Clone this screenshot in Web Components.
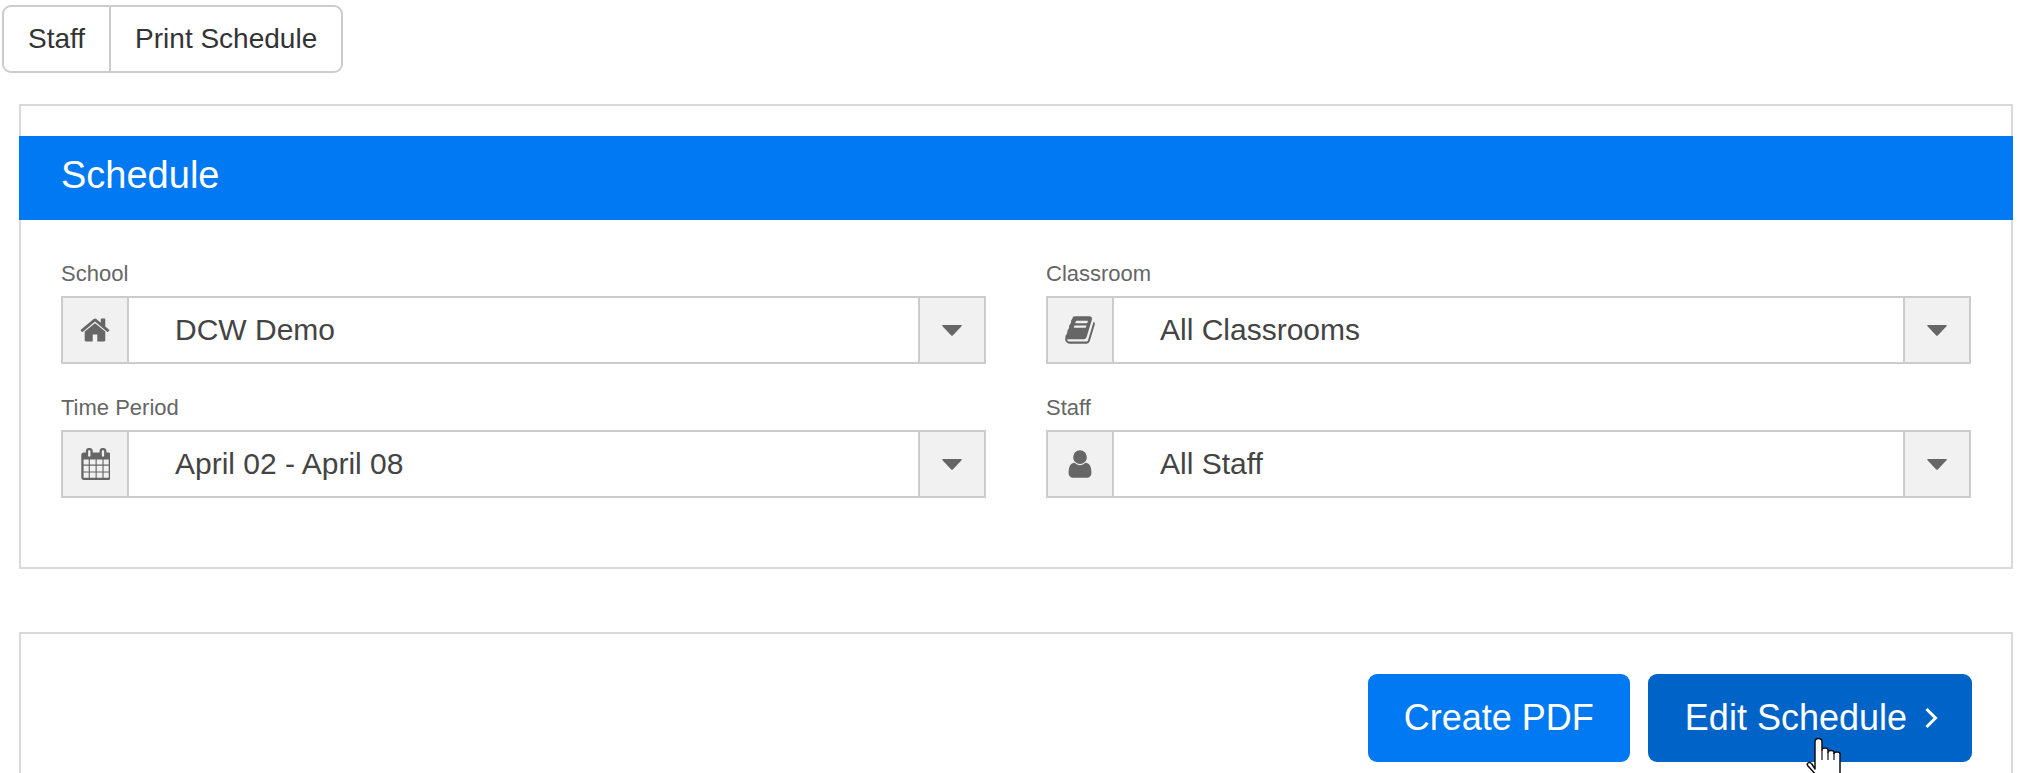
<!DOCTYPE html>
<html>
<head>
<meta charset="utf-8">
<title>Schedule</title>
<style>
  html, body { margin: 0; padding: 0; height: 100%; overflow: hidden; background: #fff; }
  body { font-family: "Liberation Sans", Arial, sans-serif; position: relative; }
  schedule-cursor { position: absolute; left: 1806px; top: 737px; }
</style>
</head>
<body>
<schedule-page>
  <tab-group>
    <tab-link>Staff</tab-link>
    <tab-link>Print Schedule</tab-link>
  </tab-group>
  <box-panel heading="Schedule">
    <div slot="body" style="display:grid;grid-template-columns:925px 925px;column-gap:60px;">
      <select-field label="School" icon="home">DCW Demo</select-field>
      <select-field label="Classroom" icon="book">All Classrooms</select-field>
      <select-field label="Time Period" icon="calendar">April 02 - April 08</select-field>
      <select-field label="Staff" icon="user">All Staff</select-field>
    </div>
  </box-panel>
  <action-bar>
    <action-button>Create PDF</action-button>
    <action-button dark chevron>Edit Schedule</action-button>
  </action-bar>
</schedule-page>
<schedule-cursor></schedule-cursor>

<script>
const ICONS = {
  home: ['0 0 1792 1792', 'M1472 992v480q0 26-19 45t-45 19h-384v-384h-256v384h-384q-26 0-45-19t-19-45v-480q0-1 .5-3t.5-3l575-474 575 474q1 2 1 6zm223-69l-62 74q-8 9-21 11h-3q-13 0-21-7l-692-577-692 577q-12 8-24 7-13-2-21-11l-62-74q-8-10-7-23.500t11-21.500l719-599q32-26 76-26t76 26l244 204v-195q0-14 9-23t23-9h192q14 0 23 9t9 23v408l219 182q10 8 11 21.500t-7 23.500z'],
  book: ['0 0 1792 1792', 'M1703 478q40 57 18 129l-275 906q-19 64-76.500 107.500t-122.500 43.500h-923q-77 0-148.500-53.500t-99.500-131.500q-24-67-2-127 0-4 3-27t4-37q1-8-3-21.500t-3-19.500q2-11 8-21t16.500-23.500 16.500-23.500q23-38 45-91.500t30-91.500q3-10 .5-30t-.5-28q3-11 17-28t17-23q21-36 42-92t25-90q1-9-2.500-32t.5-28q4-13 22-30.500t22-22.500q19-26 42.500-84.500t27.500-96.500q1-8-3-25.500t-2-26.500q2-8 9-18t18-23 17-21q8-12 16.500-30.500t15-35 16-36 19.500-32 26.500-23.500 36-11.500 47.500 5.500l-1 3q38-9 51-9h761q74 0 114 56t18 130l-274 906q-36 119-71.500 153.500t-128.500 34.500h-869q-27 0-38 15-11 16-1 43 24 70 144 70h923q29 0 56-15.500t35-41.500l300-987q7-22 5-57 38 15 59 43zm-1064 2q-4 13 2 22.500t20 9.500h608q13 0 25.500-9.500t16.500-22.500l21-64q4-13-2-22.500t-20-9.500h-608q-13 0-25.500 9.500t-16.500 22.500zm-83 256q-4 13 2 22.500t20 9.500h608q13 0 25.500-9.500t16.500-22.500l21-64q4-13-2-22.500t-20-9.500h-608q-13 0-25.500 9.500t-16.500 22.500z'],
  calendar: ['0 0 1664 1792', 'M192 1664h288v-288h-288v288zm352 0h320v-288h-320v288zm-352-352h288v-320h-288v320zm352 0h320v-320h-320v320zm-352-384h288v-288h-288v288zm736 736h320v-288h-320v288zm-384-736h320v-288h-320v288zm768 736h288v-288h-288v288zm-384-352h320v-320h-320v320zm-352-864v-288q0-13-9.500-22.500t-22.500-9.500h-64q-13 0-22.500 9.500t-9.500 22.500v288q0 13 9.500 22.500t22.500 9.500h64q13 0 22.500-9.500t9.500-22.500zm736 864h288v-320h-288v320zm-384-384h320v-288h-320v288zm384 0h288v-288h-288v288zm32-480v-288q0-13-9.500-22.500t-22.500-9.500h-64q-13 0-22.500 9.500t-9.500 22.500v288q0 13 9.500 22.500t22.500 9.500h64q13 0 22.500-9.500t9.500-22.500zm384-64v1280q0 52-38 90t-90 38h-1408q-52 0-90-38t-38-90v-1280q0-52 38-90t90-38h128v-96q0-66 47-113t113-47h64q66 0 113 47t47 113v96h384v-96q0-66 47-113t113-47h64q66 0 113 47t47 113v96h128q52 0 90 38t38 90z'],
  user: ['0 0 1792 1792', 'M1536 1399q0 109-62.500 187t-150.500 78h-854q-88 0-150.500-78t-62.500-187q0-85 8.500-160.500t31.500-152 58.500-131 94-89 134.500-34.500q131 128 313 128t313-128q76 0 134.500 34.500t94 89 58.500 131 31.500 152 8.500 160.500zm-256-887q0 159-112.500 271.500t-271.500 112.500-271.500-112.500-112.500-271.500 112.500-271.500 271.500-112.500 271.500 112.500 112.500 271.500z']
};

class SchedulePage extends HTMLElement {
  constructor() {
    super();
    this.attachShadow({ mode: 'open' }).innerHTML = `
      <style>
        :host { display: block; padding: 5px 19px 0 2px; font-family: "Liberation Sans", Arial, sans-serif; }
      </style>
      <slot></slot>`;
  }
}

class TabGroup extends HTMLElement {
  constructor() {
    super();
    this.attachShadow({ mode: 'open' }).innerHTML = `
      <style>
        :host { display: inline-flex; height: 68px; box-sizing: border-box; border: 2px solid #ccc; border-radius: 9px; background: #fff; vertical-align: top; }
      </style>
      <slot></slot>`;
  }
}

class TabLink extends HTMLElement {
  constructor() {
    super();
    this.attachShadow({ mode: 'open' }).innerHTML = `
      <style>
        :host { display: flex; align-items: center; padding: 0 24px; font-size: 28px; color: #333; }
        :host(:not(:first-child)) { border-left: 2px solid #ccc; }
      </style>
      <slot></slot>`;
  }
}

class BoxPanel extends HTMLElement {
  constructor() {
    super();
    this.attachShadow({ mode: 'open' }).innerHTML = `
      <style>
        :host { display: block; box-sizing: border-box; margin: 31px 0 0 17px; height: 465px; border: 2px solid #d9d9d9; padding-top: 30px; }
        h2 { margin: 0 -2px; height: 84px; box-sizing: border-box; padding: 0 0 5px 42px; display: flex; align-items: center; background: #0079f2; color: #fff; font-size: 38px; font-weight: normal; }
        .body { padding: 34px 40px 0 40px; }
      </style>
      <h2></h2>
      <div class="body"><slot name="body"></slot></div>`;
    this.shadowRoot.querySelector('h2').textContent = this.getAttribute('heading');
  }
}

class SelectField extends HTMLElement {
  constructor() {
    super();
    const [box, d] = ICONS[this.getAttribute('icon')];
    this.attachShadow({ mode: 'open' }).innerHTML = `
      <style>
        :host { display: block; height: 134px; }
        label { display: block; height: 42px; font-size: 22px; line-height: 39px; color: #666; }
        .control { display: flex; box-sizing: border-box; height: 68px; border: 2px solid #ccc; }
        .addon { flex: none; width: 64px; display: flex; align-items: center; justify-content: center; background: #f1f1f1; }
        .addon.left { border-right: 2px solid #ccc; }
        .addon.right { border-left: 2px solid #ccc; }
        .value { flex: 1; display: flex; align-items: center; padding-left: 46px; font-size: 30px; color: #444; }
        svg { display: block; fill: #666; }
      </style>
      <label></label>
      <div class="control">
        <span class="addon left"><svg width="${box === '0 0 1664 1792' ? 30 : 32}" height="32" viewBox="${box}"><path d="${d}"/></svg></span>
        <span class="value"><slot></slot></span>
        <span class="addon right"><svg width="20" height="11" viewBox="0 0 20 11"><path d="M1 0h18q1.500 0 .5 1.200l-8.500 9q-1 1-2 0l-8.500-9q-1-1.200 .5-1.200z"/></svg></span>
      </div>`;
    this.shadowRoot.querySelector('label').textContent = this.getAttribute('label');
  }
}

class ActionBar extends HTMLElement {
  constructor() {
    super();
    this.attachShadow({ mode: 'open' }).innerHTML = `
      <style>
        :host { display: flex; justify-content: flex-end; gap: 18px; box-sizing: border-box; margin: 63px 0 0 17px; height: 200px; border: 2px solid #d9d9d9; padding: 40px 39px 0 0; }
      </style>
      <slot></slot>`;
  }
}

class ActionButton extends HTMLElement {
  constructor() {
    super();
    const chevron = this.hasAttribute('chevron')
      ? '<svg width="14" height="22" viewBox="0 0 14 22"><path d="M2.500 2l9 9-9 9" fill="none" stroke="#fff" stroke-width="3"/></svg>'
      : '';
    this.attachShadow({ mode: 'open' }).innerHTML = `
      <style>
        :host { display: flex; align-items: center; gap: 17px; box-sizing: border-box; height: 88px; padding: 0 36px 1px; border-radius: 9px; background: #0079f2; color: #fff; font-size: 36px; }
        :host([chevron]) { padding: 0 34px 1px 37px; }
        :host([dark]) { background: #0063c7; }
      </style>
      <slot></slot>${chevron}`;
  }
}

class ScheduleCursor extends HTMLElement {
  constructor() {
    super();
    this.attachShadow({ mode: 'open' }).innerHTML = `
      <style>
        :host { display: block; width: 36px; height: 40px; }
        svg { display: block; }
      </style>
      <svg width="36" height="40" viewBox="0 0 36 40">
        <path d="M9 27V5q0-3.500 3.500-3.500T16 5V13q0-2 3-2t3 2V15.500q0-2 3-2t3 2v1q0-1.500 3-1.500t3 2V40H12L2 29q-1.500-2 0-3t3.500 .5L9 32z" fill="#fff" stroke="#111" stroke-width="1.500" stroke-linejoin="round"/>
        <path d="M16 13V23M22 15V23M28 16V23" fill="none" stroke="#111" stroke-width="1.200"/>
      </svg>`;
  }
}

customElements.define('schedule-page', SchedulePage);
customElements.define('tab-group', TabGroup);
customElements.define('tab-link', TabLink);
customElements.define('box-panel', BoxPanel);
customElements.define('select-field', SelectField);
customElements.define('action-bar', ActionBar);
customElements.define('action-button', ActionButton);
customElements.define('schedule-cursor', ScheduleCursor);
</script>
</body>
</html>
